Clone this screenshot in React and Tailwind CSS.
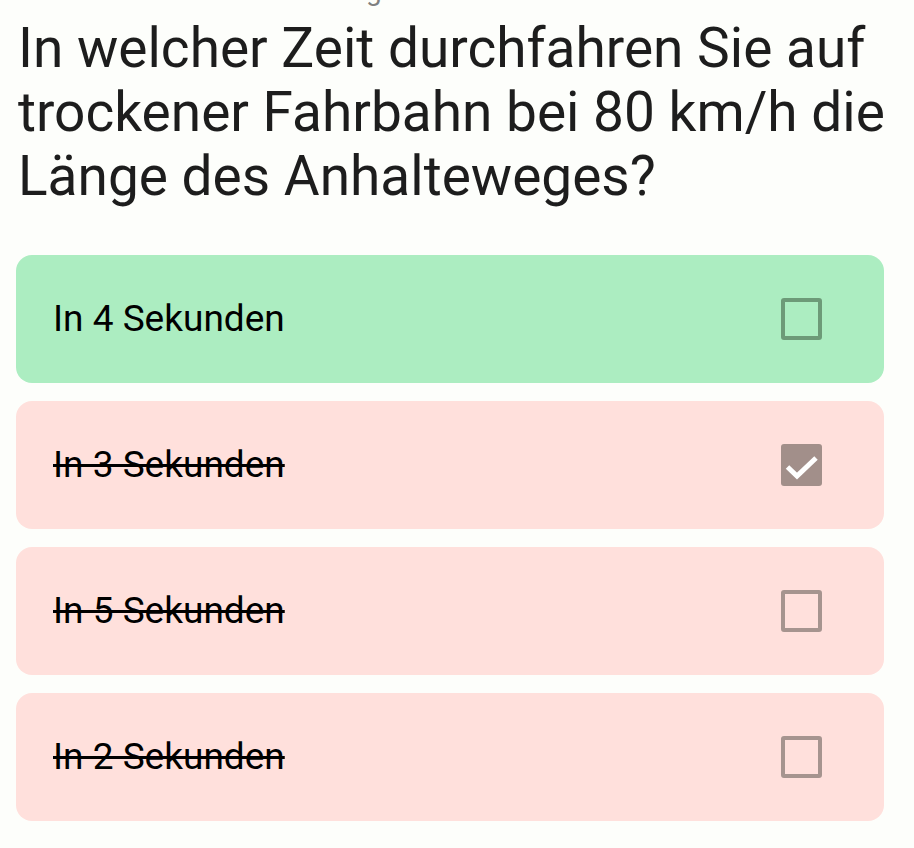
import React from "react";

const options = [
  { text: "In 4 Sekunden", correct: true, checked: false },
  { text: "In 3 Sekunden", correct: false, checked: true },
  { text: "In 5 Sekunden", correct: false, checked: false },
  { text: "In 2 Sekunden", correct: false, checked: false },
];

function Box({ correct, checked }) {
  if (checked) {
    return (
      <div className="w-[41px] h-[42px] rounded-[3px] bg-[#a28f8a]">
        <svg width="41" height="42" viewBox="0 0 41 42">
          <path d="M6.5 23 L16 32 L35 14" fill="none" stroke="white" strokeWidth="5" />
        </svg>
      </div>
    );
  }
  return (
    <div
      className={
        "w-[41px] h-[42px] rounded-[3px] border-4 " +
        (correct ? "border-[#6d9a78]" : "border-[#a6948f]")
      }
    />
  );
}

export default function App() {
  return (
    <div className="min-h-[848px] bg-[#fdfefb] font-['Roboto',sans-serif]">
      <div className="h-[6px] overflow-hidden relative">
        <div className="absolute left-0 right-0 top-[-26px] text-center text-[28px] leading-[34px] text-[#808080]">
          Frage 2 von 3 Punkte
        </div>
      </div>
      <h1 className="mt-[10px] pl-[18px] pr-[6px] text-[55px] leading-[64px] text-[#1d1d1d] font-normal">
        In welcher Zeit durchfahren Sie auf trockener Fahrbahn bei 80 km/h die Länge des Anhalteweges?
      </h1>
      <div className="mt-[47px] flex flex-col gap-[18px] ml-4 mr-[30px]">
        {options.map((o) => (
          <div
            key={o.text}
            className={
              "h-[128px] rounded-[16px] flex items-center justify-between pl-[37px] pr-[62px] " +
              (o.correct ? "bg-[#acedc1]" : "bg-[#ffe0dc]")
            }
          >
            <span className={"text-[37px] text-black " + (o.correct ? "" : "line-through")}>
              {o.text}
            </span>
            <Box correct={o.correct} checked={o.checked} />
          </div>
        ))}
      </div>
    </div>
  );
}
